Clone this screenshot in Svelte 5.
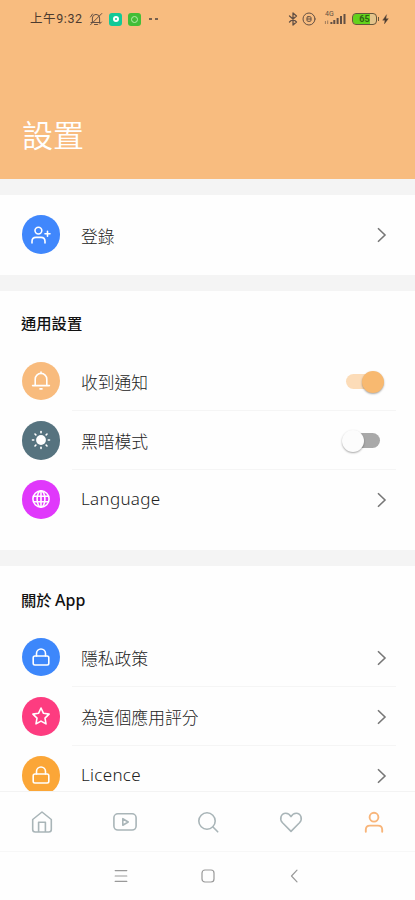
<script>
  const general = [
    { icon: 'bell', color: '#f8bb7d', label: '收到通知', end: 'on' },
    { icon: 'sun', color: '#56737f', label: '黑暗模式', end: 'off' },
    { icon: 'globe', color: '#e038fb', label: 'Language', latin: true, end: 'chevron' }
  ];
  const about = [
    { icon: 'lock', color: '#3d87fb', label: '隱私政策', end: 'chevron' },
    { icon: 'star', color: '#fd3c80', label: '為這個應用評分', end: 'chevron' },
    { icon: 'lock', color: '#fba637', label: 'Licence', latin: true, end: 'chevron' }
  ];
  const account = [{ icon: 'user', color: '#4087fc', label: '登錄', end: 'chevron' }];
  const rays = [0, 45, 90, 135, 180, 225, 270, 315];
</script>

{#snippet glyph(name)}
  <svg class="glyph" viewBox="0 0 20 20">
    {#if name === 'user'}
      <circle cx="7.4" cy="5.6" r="3.4" />
      <path d="M1 18v-1.6q0-4 4-4h5q4 0 4 4V18M16.5 6.3v5M14 8.8h5" />
    {:else if name === 'bell'}
      <path d="M1.6 14.6h16.8M4.2 14.6V8.2a5.8 5.8 0 0 1 11.6 0v6.4M10 1v1.2M9 17.9h2" />
    {:else if name === 'sun'}
      <circle cx="10" cy="10" r="4.9" fill="#fff" stroke="none" />
      {#each rays as a}
        <path d="M10 1.5v1.2" transform="rotate({a} 10 10)" />
      {/each}
    {:else if name === 'globe'}
      <circle cx="10" cy="10" r="8.1" />
      <ellipse cx="10" cy="10" rx="3.9" ry="8.1" />
      <path d="M10 2v16M2.6 7.3h14.8M2.6 12.7h14.8" />
    {:else if name === 'lock'}
      <rect x="2.2" y="9" width="15.6" height="9" rx="1.7" />
      <path d="M5.5 9V6.5a4.5 4.5 0 0 1 9 0V9" />
    {:else}
      <path d="M10 2l2.5 5.3 5.6.8-4.1 4 1 5.8-5-2.8-5 2.8 1-5.8-4.1-4 5.6-.8z" />
    {/if}
  </svg>
{/snippet}

{#snippet list(items)}
  {#each items as item}
    <div class="row">
      <span class="badge" style="background:{item.color}">{@render glyph(item.icon)}</span>
      <div class="body">
        <span class="label" class:latin={item.latin}>{item.label}</span>
        {#if item.end === 'chevron'}
          <svg class="chevron" viewBox="0 0 10 16"><path d="M1 1.2L8 8l-7 6.8" /></svg>
        {:else}
          <span class="switch {item.end}"><i></i></span>
        {/if}
      </div>
    </div>
  {/each}
{/snippet}

<div class="screen">
  <header>
    <div class="status">
      <span class="time">上午9:32</span>
      <svg class="mute" viewBox="0 0 14 14"><path d="M2 10.5h9M3.4 10.5V6a3.6 3.6 0 0 1 7.2 0v4.5M5.5 12.5h3M1.5 12.8L12.8 1.5M1.5 5l2-3M10.5 12l2-2" /></svg>
      <span class="app teal"><i></i></span>
      <span class="app green"><i></i></span>
      <span class="dots"><i></i><i></i></span>
      <span class="fill"></span>
      <svg class="bt" viewBox="0 0 10 14"><path d="M1.5 4l7 6L5 13V1l3.5 3-7 6" /></svg>
      <svg class="ring" viewBox="0 0 14 14"><circle cx="7" cy="7" r="6" /><rect x="5" y="4.7" width="4" height="4.6" rx="1" /><path d="M5.2 7h3.6" /></svg>
      <div class="net">
        <span>4G</span>
        <svg viewBox="0 0 23 13"><path d="M1.4 12V9M3.7 12V8.5" stroke-width="1" opacity=".6" /><path d="M7.4 12v-2M10.3 12V8M13.6 12V6M17 12V4M20.5 12V2" stroke-width="2" /></svg>
      </div>
      <span class="battery"><b>65</b></span>
      <svg class="bolt" viewBox="0 0 8 12"><path d="M5 .8L.8 6.8h2.6L2.8 11l4.4-6H4.6z" /></svg>
    </div>
    <h1>設置</h1>
  </header>

  <main>
    <section class="account">{@render list(account)}</section>
    <section class="general">
      <h2>通用設置</h2>
      {@render list(general)}
    </section>
    <section class="about">
      <h2>關於 <span>App</span></h2>
      {@render list(about)}
    </section>
  </main>

  <nav class="tabs">
    <svg viewBox="0 0 26 24"><path d="M3.7 9.5L13 2l9.3 7.5v10q0 2.5-2.5 2.5H6.2q-2.5 0-2.5-2.5zM9.6 22V12.2h6.8V22" /></svg>
    <svg viewBox="0 0 26 24"><rect x="1.9" y="3.8" width="22.2" height="16.2" rx="4" /><path d="M10.8 8.7v6.6l5.4-3.3z" /></svg>
    <svg viewBox="0 0 26 24"><circle cx="12" cy="11" r="8.2" /><path d="M18 17l4.7 4.8" /></svg>
    <svg viewBox="0 0 26 24"><path d="M13 21.4L4.5 12.8C1 9 3.2 3.2 7.7 3.2c2.5 0 4.2 1.4 5.3 3.4 1.1-2 2.8-3.4 5.3-3.4 4.5 0 6.7 5.8 3.2 9.6z" /></svg>
    <svg class="active" viewBox="0 0 26 24"><circle cx="13" cy="7.2" r="4.4" /><path d="M4.8 21.8v-2q0-4.2 4.2-4.2h8q4.2 0 4.2 4.2v2" /></svg>
  </nav>

  <div class="system">
    <svg viewBox="0 0 16 16"><path d="M2.2 2.6h11.6M2.2 8h11.6M2.2 13.4h11.6" /></svg>
    <svg viewBox="0 0 16 16"><rect x="2" y="2" width="12" height="12" rx="3" /></svg>
    <svg viewBox="0 0 16 16"><path d="M11 2.2L5.5 8l5.5 5.8" /></svg>
  </div>
</div>

<style>
  :global(body) { margin: 0; }
  .screen {
    width: 415px; height: 900px; overflow: hidden; display: flex; flex-direction: column;
    box-sizing: border-box; background: #fefefe; color: #222;
    font-family: "Noto Sans", "Noto Sans CJK TC", sans-serif;
  }
  svg { fill: none; stroke: currentColor; stroke-linecap: round; stroke-linejoin: round; flex: none; display: block; }
  header { height: 178.5px; flex: none; background: #f8bc7f; box-sizing: border-box; padding-top: 8.5px; }
  .status { height: 21px; display: flex; align-items: center; padding: 0 26px 0 30px; color: #635044; }
  .time { width: 54px; font: 400 12.5px/20px Roboto, "Noto Sans CJK TC", sans-serif; letter-spacing: .6px; white-space: nowrap; color: #4c3b2f; }
  .mute { width: 14px; height: 14px; margin-left: 5px; }
  .app { width: 13px; height: 13px; border-radius: 3px; margin-left: 6px; display: flex; align-items: center; justify-content: center; }
  .teal { background: #12c997; }
  .teal i { width: 2px; height: 2px; border: 2.5px solid #fff; border-radius: 50%; }
  .green { background: #42bd37; }
  .green i { width: 5px; height: 5px; border: 1.3px solid #b7edaa; border-radius: 50%; }
  .dots { display: flex; gap: 3px; margin-left: 8px; }
  .dots i { width: 3px; height: 2px; background: #77604e; }
  .fill { flex: 1; }
  .bt { width: 10px; height: 14px; margin-right: 4px; stroke-width: 1.3; }
  .ring { width: 14px; height: 14px; margin-right: 8px; }
  .net { width: 23px; height: 14px; position: relative; margin-right: 5px; }
  .net span { position: absolute; left: 1px; top: -1px; font: 7px/7px Roboto, sans-serif; }
  .net svg { width: 23px; height: 13px; stroke-linecap: butt; }
  .battery {
    position: relative; width: 25px; height: 12px; box-sizing: border-box; border: 1.5px solid #66573c; border-radius: 4px;
    background: linear-gradient(90deg, #64d21c 72%, #e4c48b 72%); background-clip: padding-box;
    text-align: center; color: #326015; margin-right: 5px; font: 9px/10px Roboto, sans-serif;
  }
  .battery b { display: block; }
  .battery::after { content: ""; position: absolute; right: -3px; top: 3px; width: 1.5px; height: 4px; background: #66573c; }
  .bolt { width: 7px; height: 11px; fill: #4b3b2e; stroke-width: .5; }
  h1 { margin: 80.5px 0 0 22px; font: 350 31px/48px "Noto Sans CJK TC", sans-serif; color: #fff; }
  main { flex: 1; min-height: 0; overflow: hidden; background: #f4f4f4; padding-top: 16px; display: flex; flex-direction: column; gap: 15.5px; }
  section { background: #fefefe; flex: none; box-sizing: border-box; }
  .account { height: 80.5px; padding-top: 10.5px; }
  .general { height: 259.5px; }
  .about { height: 260px; }
  h2 { margin: 0; height: 61px; box-sizing: border-box; padding: 17.5px 0 0 21px; font: 500 15.3px/28px "Noto Sans CJK TC", sans-serif; color: #111; }
  h2 span { font: 500 16px/20px "Noto Sans", sans-serif; }
  .about h2 { height: 62px; padding-top: 19.5px; }
  .row { display: flex; align-items: center; height: 59.2px; padding: 0 19px 0 21.5px; }
  .badge { width: 38.5px; height: 38.5px; border-radius: 50%; display: flex; align-items: center; justify-content: center; flex: none; color: #fff; }
  .glyph { width: 20px; height: 20px; stroke-width: 1.6; }
  .body { flex: 1; height: 100%; margin-left: 12px; padding: 0 9px; box-sizing: border-box; display: flex; align-items: center; justify-content: space-between; border-bottom: 1px solid #f5f5f5; }
  .row:last-child .body { border-color: transparent; }
  .label { font: 300 16.8px/26px "Noto Sans CJK TC", sans-serif; color: #222; padding-top: 3px; }
  .about .label { padding-top: 2px; }
  .label.latin { font: 300 17px/26px "Noto Sans", sans-serif; letter-spacing: .3px; padding-top: 1px; color: #222; }
  .chevron { width: 10px; height: 16px; stroke: #777; stroke-width: 1.6; stroke-linecap: butt; stroke-linejoin: miter; margin-top: 2px; }
  .switch { width: 36px; height: 15px; border-radius: 8px; position: relative; margin-top: 2px; }
  .switch.on { background: #fcdcb8; margin-right: 5px; }
  .switch.off { background: #a9a9a9; margin-right: 7px; }
  .switch i { position: absolute; top: -3.5px; width: 22px; height: 22px; border-radius: 50%; box-shadow: 0 1px 2px rgba(0, 0, 0, .35); }
  .on i { right: -2px; background: #f8b970; }
  .off i { left: -2px; background: #fcfcfc; }
  .tabs { height: 60px; flex: none; box-sizing: border-box; border-top: 1px solid #f3f3f3; display: flex; justify-content: space-around; align-items: center; background: #fefefe; color: #a9b5b8; }
  .tabs svg { width: 26px; height: 24px; stroke-width: 1.6; }
  .tabs .active { color: #f8b57a; stroke-width: 1.9; }
  .system { height: 49px; flex: none; box-sizing: border-box; border-top: 1px solid #f7f7f7; display: flex; justify-content: center; align-items: center; gap: 70.5px; color: #999; background: #fefefe; }
  .system svg { width: 16px; height: 16px; stroke-width: 1.2; }
</style>
